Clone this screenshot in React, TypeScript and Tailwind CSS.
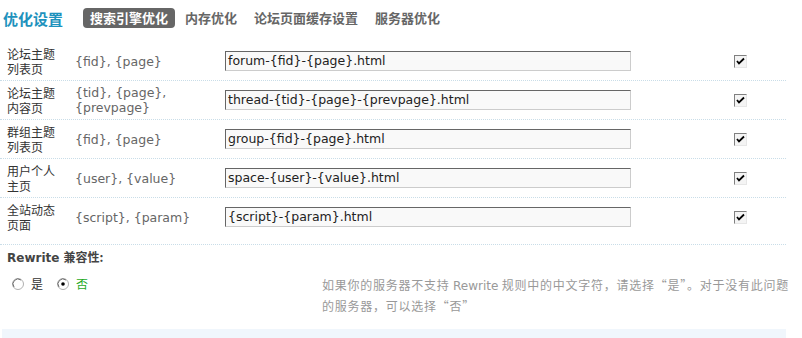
import React from "react";

const rows = [
  { label: ["论坛主题", "列表页"], vars: ["{fid}, {page}"], value: "forum-{fid}-{page}.html" },
  { label: ["论坛主题", "内容页"], vars: ["{tid}, {page},", "{prevpage}"], value: "thread-{tid}-{page}-{prevpage}.html" },
  { label: ["群组主题", "列表页"], vars: ["{fid}, {page}"], value: "group-{fid}-{page}.html" },
  { label: ["用户个人", "主页"], vars: ["{user}, {value}"], value: "space-{user}-{value}.html" },
  { label: ["全站动态", "页面"], vars: ["{script}, {param}"], value: "{script}-{param}.html" },
];

const latin = { fontFamily: '"DejaVu Sans", "Noto Sans CJK SC", sans-serif' };
const cjk = { fontFamily: '"Noto Sans CJK SC", sans-serif' };

function Check() {
  return (
    <span className="inline-block w-[13px] h-[13px] border-t border-l border-t-[#808080] border-l-[#808080] border-b border-r border-b-[#e6e6e6] border-r-[#e6e6e6] bg-[#f4f4f4]">
      <svg width="11" height="11" viewBox="0 0 11 11" className="block">
        <path d="M2 5 L4 7.5 L9 2.5" stroke="#000" strokeWidth="1.8" fill="none" />
      </svg>
    </span>
  );
}

function Radio({ on }: { on?: boolean }) {
  return (
    <svg width="12" height="12" viewBox="0 0 12 12" className="block">
      <circle cx="6" cy="6" r="5.5" fill="#fff" stroke="#b0b0b0" />
      <path d="M2 9 A5 5 0 0 1 9 2" stroke="#707070" strokeWidth="1" fill="none" />
      {on && <circle cx="6" cy="6" r="1.8" fill="#000" />}
    </svg>
  );
}

export default function App() {
  return (
    <div className="w-[802px] h-[338px] bg-white overflow-hidden" style={cjk}>
      <div className="w-[786px]">
        <div className="h-[42px] flex items-center pl-[3px] pb-[6px]">
          <span className="text-[15px] font-bold text-[#1e92bd] leading-none">优化设置</span>
          <div className="flex items-center gap-[3px] ml-[20px]">
            <span className="px-[7px] h-[20px] flex items-center rounded-[4px] bg-[#666] text-white text-[13px] font-bold">搜索引擎优化</span>
            <span className="px-[7px] h-[20px] flex items-center text-[#666] text-[13px] font-bold">内存优化</span>
            <span className="px-[7px] h-[20px] flex items-center text-[#666] text-[13px] font-bold">论坛页面缓存设置</span>
            <span className="px-[7px] h-[20px] flex items-center text-[#666] text-[13px] font-bold">服务器优化</span>
          </div>
        </div>
        {rows.map((r, i) => (
          <div
            key={i}
            className={`flex items-center border-b border-dotted border-[#c9dde8] ${i === rows.length - 1 ? "h-[47px] pb-[8px]" : "h-[39px]"}`}
          >
            <div className="w-[75px] shrink-0 pl-[7px] text-[12px] leading-[15px] text-[#333]">
              {r.label[0]}
              <br />
              {r.label[1]}
            </div>
            <div className="w-[150px] shrink-0 text-[12.5px] leading-[15px] text-[#666]" style={latin}>
              {r.vars[0]}
              {r.vars[1] && (
                <>
                  <br />
                  {r.vars[1]}
                </>
              )}
            </div>
            <div className="w-[406px] shrink-0 h-[20px] bg-[#f9f9f9] border-t border-l border-t-[#666] border-l-[#666] border-b border-r border-b-[#ccc] border-r-[#ccc] flex items-center pl-[2px] text-[12.5px] text-[#222]" style={latin}>
              {r.value}
            </div>
            <div className="ml-[103px]">
              <Check />
            </div>
          </div>
        ))}
        <div className="pl-[7px] pt-[5px] text-[12px] font-bold text-[#444] leading-[14px]" style={latin}>
          Rewrite <span style={cjk}>兼容性:</span>
        </div>
        <div className="flex items-start mt-[10px]">
          <div className="w-[322px] shrink-0 flex items-center pl-[12px] h-[18px] text-[12px]">
            <Radio />
            <span className="ml-[7px] text-[#333]">是</span>
            <span className="ml-[14px]"><Radio on /></span>
            <span className="ml-[7px] text-[#1faa1f]">否</span>
          </div>
          <div className="w-[464px] shrink-0 whitespace-nowrap text-[12px] leading-[20px] text-[#999] tracking-[0.75px]">
            如果你的服务器不支持 <span style={latin} className="tracking-normal">Rewrite</span> 规则中的中文字符，请选择“是”。对于没有此问题<br />
            的服务器，可以选择“否”
          </div>
        </div>
        <div className="ml-[2px] mt-[13px] h-[12px] bg-[#f0f6fc]" />
      </div>
    </div>
  );
}
